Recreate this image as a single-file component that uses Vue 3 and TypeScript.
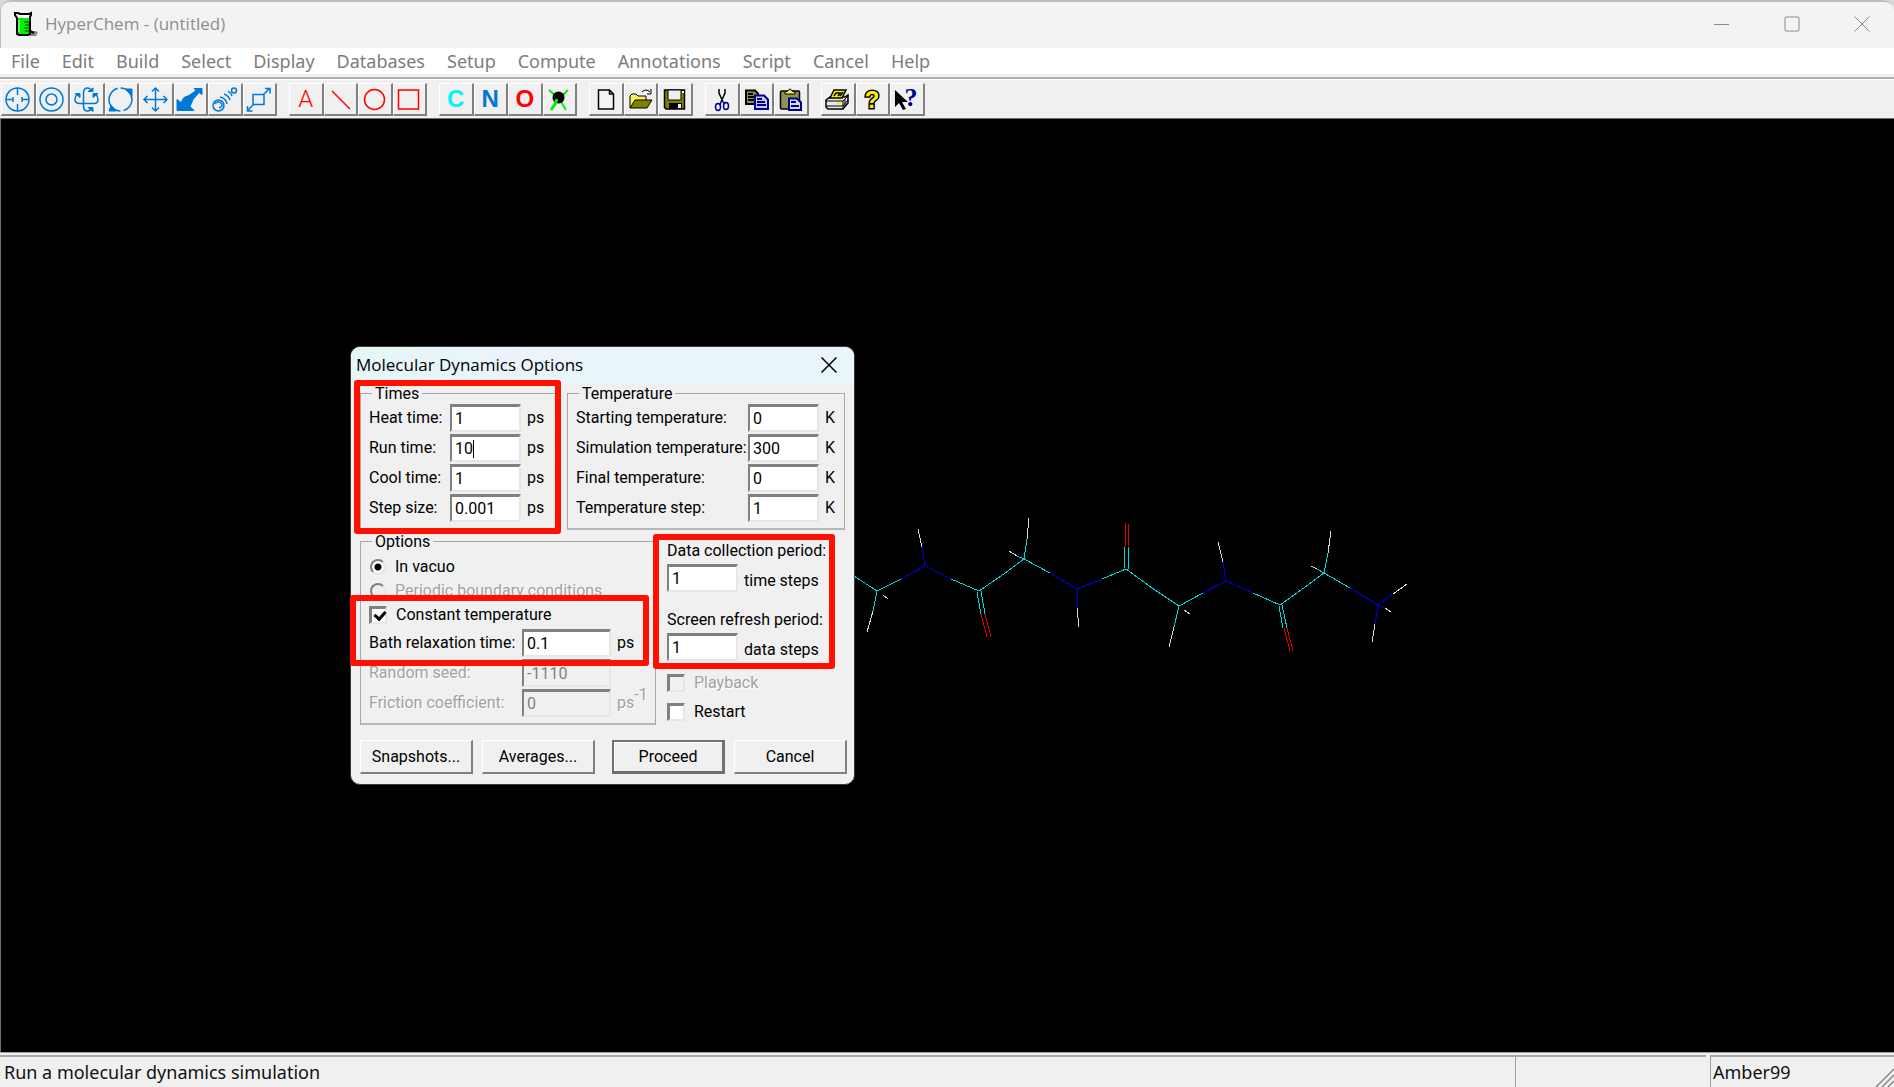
<script setup lang="ts">
import { ref } from 'vue'

const menus = ['File', 'Edit', 'Build', 'Select', 'Display', 'Databases', 'Setup', 'Compute', 'Annotations', 'Script', 'Cancel', 'Help']

interface Field { id: string; label: string; value: string; unit: string; caret?: boolean }

const times = ref<Field[]>([
  { id: 'heat', label: 'Heat time:', value: '1', unit: 'ps' },
  { id: 'run', label: 'Run time:', value: '10', unit: 'ps', caret: true },
  { id: 'cool', label: 'Cool time:', value: '1', unit: 'ps' },
  { id: 'step', label: 'Step size:', value: '0.001', unit: 'ps' },
])
const temps = ref<Field[]>([
  { id: 't-start', label: 'Starting temperature:', value: '0', unit: 'K' },
  { id: 't-sim', label: 'Simulation temperature:', value: '300', unit: 'K' },
  { id: 't-final', label: 'Final temperature:', value: '0', unit: 'K' },
  { id: 't-step', label: 'Temperature step:', value: '1', unit: 'K' },
])
const bath = ref('0.1')
const seed = ref('-1110')
const friction = ref('0')
const collect = ref('1')
const refresh = ref('1')
const medium = ref('vacuo')
const constantTemp = ref(true)
const playback = ref(false)
const restart = ref(false)

// Half-bonds of the peptide chain, coloured by the atom they belong to.
const C = '#00d8d8'
const N = '#0000e0'
const O = '#e00000'
const H = '#d8d8d8'
type Bond = [string, number, number, number, number]
const bonds: Bond[] = [
  [C, 854, 576, 877, 591], [C, 877, 591, 873, 611], [H, 873, 611, 867, 632], [H, 883, 595, 888, 599],
  [C, 877, 591, 901, 579], [N, 901, 579, 925, 566], [N, 925, 566, 922, 547], [H, 922, 547, 918, 529],
  [N, 925, 566, 951, 579], [C, 951, 579, 979, 591], [C, 977, 592, 981, 614], [C, 981, 591, 985, 614],
  [O, 981, 614, 987, 637], [O, 985, 614, 991, 637], [C, 979, 591, 1001, 576], [C, 1001, 576, 1024, 559],
  [C, 1024, 559, 1027, 539], [H, 1027, 539, 1029, 518], [C, 1024, 559, 1017, 556], [H, 1017, 556, 1009, 551],
  [C, 1024, 559, 1050, 573], [N, 1050, 573, 1077, 589], [N, 1077, 589, 1077, 608], [H, 1077, 608, 1079, 627],
  [N, 1077, 589, 1102, 579], [C, 1102, 579, 1126, 569], [C, 1124, 569, 1125, 547], [C, 1128, 569, 1128, 547],
  [O, 1125, 547, 1125, 523], [O, 1128, 547, 1129, 524], [C, 1126, 569, 1152, 588], [C, 1152, 588, 1179, 606],
  [C, 1179, 606, 1174, 627], [H, 1174, 627, 1169, 647], [H, 1184, 610, 1190, 614], [C, 1179, 606, 1203, 593],
  [N, 1203, 593, 1226, 581], [N, 1226, 581, 1223, 562], [H, 1223, 562, 1218, 542], [N, 1226, 581, 1253, 593],
  [C, 1253, 593, 1280, 605], [C, 1279, 606, 1283, 628], [C, 1282, 605, 1287, 628], [O, 1284, 628, 1290, 651],
  [O, 1287, 628, 1293, 651], [C, 1280, 605, 1301, 590], [C, 1301, 590, 1324, 573], [C, 1324, 573, 1328, 553],
  [H, 1328, 553, 1331, 531], [C, 1324, 573, 1317, 569], [H, 1317, 569, 1311, 566], [C, 1324, 573, 1350, 588],
  [N, 1350, 588, 1378, 605], [N, 1378, 605, 1393, 594], [H, 1393, 594, 1407, 584], [N, 1378, 605, 1385, 608],
  [H, 1385, 608, 1391, 612], [N, 1378, 605, 1375, 624], [H, 1375, 624, 1372, 642],
]
</script>

<template>
  <div class="window">
    <header class="titlebar">
      <svg class="logo" width="26" height="26" viewBox="0 0 26 26">
        <path d="M17 20h5l3 1-2 4h-6z" fill="#888" />
        <path d="M3 7h15v16H5z" fill="#00f000" />
        <path d="M2 2h3l2 1h9l2-1v2l-1 2v17l-2 1H6l-2-1V7L2 4z" fill="none" stroke="#000" stroke-width="2" />
        <path d="M6 4h10v3H5z" fill="#fff" />
        <path d="M11 11h5M12 14h4M11 17h5M12 20h4" stroke="#003800" />
        <path d="M6 9v12" stroke="#baffba" />
        <path d="M17 20l4 2" stroke="#000" stroke-width="2" />
      </svg>
      <h1>HyperChem - (untitled)</h1>
      <div class="winbuttons">
        <button aria-label="Minimize"><svg width="16" height="16"><path d="M0 8.5h15" /></svg></button>
        <button aria-label="Maximize"><svg width="16" height="16"><rect x="1" y="1" width="14" height="14" rx="1" /></svg></button>
        <button aria-label="Close"><svg width="16" height="16"><path d="M0.5 0.5l15 15M15.5 0.5l-15 15" /></svg></button>
      </div>
    </header>

    <nav class="menubar">
      <button v-for="m in menus" :key="m">{{ m }}</button>
    </nav>

    <div class="toolbar">
      <div class="group eight blue">
        <button aria-label="Draw"><svg viewBox="0 0 32 30"><circle cx="15.5" cy="15.5" r="11.5" /><path d="M15.5 4v7M15.5 20v7M4 15.5h7M20 15.5h7M11 13v5M20 13v5" /></svg></button>
        <button aria-label="Select"><svg viewBox="0 0 32 30"><circle cx="15.5" cy="15.5" r="11.5" /><circle cx="15.5" cy="15.5" r="5.5" /></svg></button>
        <button aria-label="Rotate out of plane"><svg viewBox="0 0 32 30"><path d="M12.5 23V9q0-5 4-5 3 0 4 3M12.5 22q0 5 4 5 3 0 4-3M8 19.5h15q4 0 4-4 0-3-2-5M9 19.5q-5 0-5-4 0-3 2-5" /><path class="solid" d="M17 7.500h5V4zM17 23.500h5v4zM4 9.500h5v4zM27 9.500h-5v4z" /></svg></button>
        <button aria-label="Rotate in plane"><svg viewBox="0 0 32 30"><circle cx="15.5" cy="15.5" r="11.5" stroke-dasharray="15 3 33 3 19" /><path class="solid" d="M20 5h7v7zM4 27h7l-5-6z" /></svg></button>
        <button aria-label="Translate"><svg viewBox="0 0 32 30"><path d="M15.5 4v23M4 15.5h23M12 7.500l3.500-3.500 3.500 3.500M12 23.500l3.500 3.500 3.500-3.500M7.500 12l-3.500 3.500 3.500 3.500M23.500 12l3.500 3.500-3.500 3.500" /></svg></button>
        <button aria-label="Zoom"><svg viewBox="0 0 32 30"><path class="solid" d="M3 15.500l4 3 3-5 5-2 7-5-2-2h8v6l-3-2-6 7-3 7 4 4H3z" /></svg></button>
        <button aria-label="Z translate"><svg viewBox="0 0 32 30"><circle cx="9.5" cy="21.5" r="5.5" /><path d="M6 20q3-4 6-1t-2 5M11 13q6 1 7 7M15 10q5 2 6 6M19 7q3 2 4 5" /><circle cx="25" cy="6.5" r="2.5" /></svg></button>
        <button aria-label="Clip"><svg viewBox="0 0 32 30"><path d="M10 10.500h11v10H10zM21 10l6-6M22 4.500h5v5M10 21l-6 6M4.500 22v5h5" /></svg></button>
      </div>
      <div class="group four red">
        <button aria-label="Annotate" class="thin">A</button>
        <button aria-label="Line"><svg viewBox="0 0 32 30"><path d="M8 7l18 18" /></svg></button>
        <button aria-label="Circle"><svg viewBox="0 0 32 30"><circle cx="15.5" cy="15.5" r="10" /></svg></button>
        <button aria-label="Rectangle"><svg viewBox="0 0 32 30"><path d="M5.500 6h20v19h-20z" /></svg></button>
      </div>
      <div class="group four">
        <button class="c">C</button>
        <button class="n">N</button>
        <button class="o">O</button>
        <button aria-label="Methane"><svg viewBox="0 0 32 30"><path d="M6 6l9 8M25 6l-8 8M23 26l-6-10" stroke="#00f000" stroke-width="2" /><circle cx="15.5" cy="13.5" r="6" /><path d="M14 15l-2 5-4 6" fill="none" stroke="#00f000" stroke-width="3" /></svg></button>
      </div>
      <div class="group three">
        <button aria-label="New"><svg viewBox="0 0 32 30"><path d="M8.500 6h11l4 4v15h-15zM19.500 6v4h4" fill="#f4f4f4" stroke="#000" stroke-width="1.5" /></svg></button>
        <button aria-label="Open"><svg viewBox="0 0 32 30"><path d="M5 24V12l2-2h4l2 2h8v4" fill="#f8f060" stroke="#000" /><path d="M5 24l5-8h17l-5 8z" fill="#808000" stroke="#000" /><path d="M17 8q4-4 8 0M26 5v5h-4" fill="none" stroke="#000" /></svg></button>
        <button aria-label="Save"><svg viewBox="0 0 32 30"><path d="M5.500 6h20v19H7l-1.500-1.500z" fill="#808000" stroke="#000" stroke-width="1.5" /><path d="M9 6h13v10H9z" fill="#f0f0f0" stroke="#000" /><path d="M10 19h13v6H10z" /><path d="M19 20h3v4h-3zM23 7h2v2h-2z" fill="#f0f0f0" /></svg></button>
      </div>
      <div class="group three">
        <button aria-label="Cut"><svg viewBox="0 0 32 30"><path d="M13 5v4l4 9M19 5v4l-4 9" fill="none" stroke="#000" stroke-width="1.5" /><g fill="none" stroke="#000090" stroke-width="1.5"><ellipse cx="12" cy="23" rx="2.5" ry="3.5" /><ellipse cx="20" cy="22" rx="2.5" ry="3.5" /><path d="M15 18l-1 3M17 18l2 2" /></g></svg></button>
        <button aria-label="Copy"><svg viewBox="0 0 32 30"><path d="M5 6.500h9l3 3V20H5z" fill="#909050" stroke="#000" stroke-width="2" /><path d="M7 10h5M7 13h7M7 16h7" stroke="#000" stroke-width="2" /><path d="M14 11.500h9l4 4V25H14z" fill="#c8c8e0" stroke="#000090" stroke-width="2" /><path d="M16 15h5M16 18h8M16 21h9" stroke="#000090" stroke-width="2" /></svg></button>
        <button aria-label="Paste"><svg viewBox="0 0 32 30"><rect x="5.5" y="7" width="19" height="18" rx="1" fill="#909050" stroke="#000" stroke-width="1.5" /><path d="M10 10V8l3-1q2-4 4 0l3 1v2z" fill="#f8f060" stroke="#000" /><path d="M14 14.500h8l4 4V26H14z" fill="#d8d8e8" stroke="#000090" stroke-width="2" /><path d="M16 18h5M16 22h8" stroke="#000090" stroke-width="2" /></svg></button>
      </div>
      <div class="group three">
        <button aria-label="Print"><svg viewBox="0 0 32 30"><path d="M4 16l4-3h15l3-2v8l-5 6H6l-2-2z" fill="#e8e8e8" stroke="#000" stroke-width="1.5" /><path d="M8 14l4-8h12l-4 8z" fill="#f8f000" stroke="#000" stroke-width="1.5" /><path d="M12 12l2-3h4l-2 3M18 12l3-4" fill="none" stroke="#000" stroke-width="1.5" /><path d="M4 17h17l5-5M4 22h17l5-6M21 17v8M23 15v8" fill="none" stroke="#000" /><path d="M15 18h4v2h-4z" fill="#f8f000" /></svg></button>
        <button aria-label="Help"><svg viewBox="0 0 32 30"><text x="15" y="24" text-anchor="middle" class="help">?</text></svg></button>
        <button aria-label="Context help"><svg viewBox="0 0 32 30"><path d="M4 6v17l4-4 4 7 3-1-4-7h6z" /><text x="20" y="22" text-anchor="middle" class="what">?</text></svg></button>
      </div>
    </div>

    <main class="workspace">
      <svg class="molecule" width="1894" height="933" viewBox="0 119 1894 933" shape-rendering="crispEdges">
        <line v-for="(b, i) in bonds" :key="i" :stroke="b[0]" :x1="b[1]" :y1="b[2]" :x2="b[3]" :y2="b[4]" />
      </svg>

      <section class="dialog" role="dialog" aria-labelledby="dlg-title">
        <header class="dlg-title">
          <h2 id="dlg-title">Molecular Dynamics Options</h2>
          <button aria-label="Close dialog"><svg width="16" height="16"><path d="M0.5 0.5l15 15M15.5 0.5l-15 15" /></svg></button>
        </header>
        <form class="dlg-body" @submit.prevent>
          <div class="row">
            <fieldset class="times">
              <legend>Times</legend>
              <div v-for="f in times" :key="f.id" class="field">
                <label :for="f.id">{{ f.label }}</label>
                <span class="box"><input :id="f.id" v-model="f.value" type="text"><i v-if="f.caret" class="caret" /></span>
                <span class="unit">{{ f.unit }}</span>
              </div>
            </fieldset>
            <fieldset class="temps">
              <legend>Temperature</legend>
              <div v-for="f in temps" :key="f.id" class="field">
                <label :for="f.id">{{ f.label }}</label>
                <span class="box"><input :id="f.id" v-model="f.value" type="text"></span>
                <span class="unit">{{ f.unit }}</span>
              </div>
            </fieldset>
          </div>

          <div class="row second">
            <fieldset class="options">
              <legend>Options</legend>
              <label class="pick"><input v-model="medium" type="radio" name="medium" value="vacuo">In vacuo</label>
              <label class="pick off"><input v-model="medium" type="radio" name="medium" value="periodic" disabled>Periodic boundary conditions</label>
              <label class="pick"><input v-model="constantTemp" type="checkbox">Constant temperature</label>
              <div class="field first">
                <label for="bath">Bath relaxation time:</label>
                <span class="box"><input id="bath" v-model="bath" type="text"></span>
                <span class="unit">ps</span>
              </div>
              <div class="field off">
                <label for="seed">Random seed:</label>
                <span class="box"><input id="seed" v-model="seed" type="text" disabled></span>
              </div>
              <div class="field off">
                <label for="friction">Friction coefficient:</label>
                <span class="box"><input id="friction" v-model="friction" type="text" disabled></span>
                <span class="unit">ps<sup>-1</sup></span>
              </div>
            </fieldset>
            <div class="periods">
              <label for="collect">Data collection period:</label>
              <div class="period"><span class="box"><input id="collect" v-model="collect" type="text"></span><span>time steps</span></div>
              <label for="refresh">Screen refresh period:</label>
              <div class="period"><span class="box"><input id="refresh" v-model="refresh" type="text"></span><span>data steps</span></div>
              <label class="pick off"><input v-model="playback" type="checkbox" disabled>Playback</label>
              <label class="pick"><input v-model="restart" type="checkbox">Restart</label>
            </div>
          </div>

          <div class="actions">
            <button type="button">Snapshots...</button>
            <button type="button">Averages...</button>
            <button type="submit" class="default">Proceed</button>
            <button type="button">Cancel</button>
          </div>
        </form>
        <div class="mark mark-times" />
        <div class="mark mark-bath" />
        <div class="mark mark-periods" />
      </section>
    </main>

    <footer class="status">
      <div class="pane message">Run a molecular dynamics simulation</div>
      <div class="pane middle" />
      <div class="pane method">Amber99
        <svg class="grip" width="20" height="20"><path d="M2 20L20 2M8 20L20 8M14 20l6-6" stroke="#888" stroke-width="1.5" /></svg>
      </div>
    </footer>
  </div>
</template>

<style>
body { margin: 0; overflow: hidden; background: #d8d8d8; }
</style>

<style scoped>
* { box-sizing: border-box; }
button { font: inherit; color: inherit; padding: 0; margin: 0; border: 0; background: none; }
.window {
  display: flex; flex-direction: column; height: 100vh; overflow: hidden;
  background: #f0f0f0; border-radius: 10px 10px 0 0; font-family: "Noto Sans", "Open Sans", sans-serif;
}
.titlebar {
  flex: none; display: flex; align-items: center; height: 48px; padding: 0 0 2px 12px;
  background: #f3f3f3; border-top: 2px solid #bdbdbd; border-left: 1px solid #bdbdbd; border-radius: 10px 10px 0 0;
}
.logo { flex: none; }
.titlebar h1 { flex: 1; margin: 0 0 0 6px; font: 400 17px/24px "Open Sans", sans-serif; color: #8e8e8e; }
.winbuttons { display: flex; margin-right: -3px; }
.winbuttons button { display: flex; align-items: center; justify-content: center; width: 70px; height: 44px; }
.winbuttons svg { fill: none; stroke: #8a8a8a; }

.menubar { flex: none; display: flex; gap: 22px; height: 26px; padding-left: 11px; background: #fff; font-size: 18px; line-height: 26px; color: #7c7c7c; }

.toolbar {
  flex: none; display: flex; gap: 12px; height: 45px; padding: 6px 0 0 1px;
  border-top: 3px solid #f0f0f0; border-bottom: 1px solid #707070; background: #f0f0f0;
  box-shadow: inset 0 2px #b0b0b0, inset 0 3px #fff;
}
.group { display: flex; }
.eight { width: 276px; }
.four { width: 138px; }
.three { width: 104px; }
.group button {
  flex: 1; display: flex; align-items: center; justify-content: center; height: 33px; overflow: hidden;
  border: solid; border-width: 1px 2px 2px 1px; border-color: #fff #808080 #808080 #fff; background: #f0f0f0;
  font: 700 24px/30px "Liberation Sans", Arial, sans-serif;
}
.group svg { flex: none; width: 32px; height: 30px; }
.blue svg, .red svg { fill: none; stroke: #0078d7; stroke-width: 1.5; }
.red svg { stroke: #f00; }
.blue .solid { fill: #0078d7; stroke-width: 1; }
.group .thin { font: 300 24px/30px Roboto, sans-serif; color: #f00; }
.c { color: #00f4ff; }
.n { color: #0078d7; }
.o { color: #f00; }
.help { font: 700 24px "Liberation Sans", Arial, sans-serif; fill: #f8f000; stroke: #000; stroke-width: 3px; paint-order: stroke; }
.what { font: 700 26px "Liberation Serif", serif; fill: #000090; }

.workspace { flex: 1; position: relative; overflow: hidden; background: #000; border-left: 1px solid #707070; }
.molecule { display: block; margin-left: -1px; }

.dialog {
  position: absolute; left: 349px; top: 227px; width: 505px; border: 1px solid #3a3a3a; border-radius: 10px;
  background: #f0f0f0; color: #000; font: 16px/18px Roboto, "Liberation Sans", sans-serif;
}
.dlg-title {
  display: flex; align-items: center; justify-content: space-between; height: 37px; padding: 0 17px 2px 5px;
  border-radius: 9px 9px 0 0; background: linear-gradient(90deg, #e6f6f6, #eaf4fb 40%);
}
.dlg-title h2 { margin: 0; font: 400 17px/24px "Open Sans", sans-serif; }
.dlg-title button { height: 16px; }
.dlg-title svg { display: block; fill: none; stroke: #000; stroke-width: 1.5; }
.dlg-body { padding: 0 7px 10px 9px; }
.row { display: flex; gap: 9px; }
.second { margin-top: 2px; gap: 11px; }
fieldset { margin: 0; padding: 2px 6px 6px 8px; border: 1px solid #a8a8a8; border-bottom-width: 2px; border-bottom-color: #b8b8b8; min-width: 0; }
legend { margin-left: 3px; padding: 2px 3px 0; line-height: 16px; }
.times { width: 198px; }
.temps { width: 278px; }
.options { width: 296px; padding-top: 5px; }
.field { display: flex; align-items: center; height: 28px; }
.field + .field { margin-top: 2px; }
.field.first { margin-top: 2px; }
.field label { flex: none; white-space: nowrap; width: 81px; }
.temps .field label { width: 172px; }
.options .field label { width: 153px; }
.box { flex: none; position: relative; display: block; width: 71px; height: 28px; }
.options .box { width: 89px; }
.box input {
  display: block; width: 100%; height: 100%; padding: 0 0 0 3px; margin: 0; border: solid; border-width: 3px 2px 2px 2px;
  border-color: #808080 #e6e6e6 #e6e6e6 #808080; border-radius: 0; background: #fff; color: #000; font: inherit; outline: 0;
}
.box input:disabled { background: #f0f0f0; color: #808080; }
.caret { position: absolute; left: 23px; top: 6px; width: 1px; height: 18px; background: #000; }
.unit { margin-left: 6px; white-space: nowrap; }
.unit sup { font-size: 16px; line-height: 0; vertical-align: 8px; }
.off { color: #a2a2a2; text-shadow: 1px 1px #fff; }
.pick { display: flex; align-items: center; height: 24px; white-space: nowrap; }
.pick input { appearance: none; flex: none; width: 18px; height: 18px; margin: 0 9px 0 0; background: #fff; border: solid; border-width: 3px 2px 2px 3px; border-color: #808080 #e6e6e6 #e6e6e6 #808080; }
.pick input:disabled { background: #f0f0f0; }
.pick input[type="radio"] { width: 16px; height: 16px; margin: 0 9px 0 1px; border-width: 2px; border-radius: 50%; }
.pick input[type="radio"]:checked { background: radial-gradient(circle, #000 3px, #fff 4px); }
.pick input[type="checkbox"]:checked::after { content: ""; display: block; width: 5px; height: 8px; margin: 0 0 0 4px; border: solid #000; border-width: 0 3px 3px 0; transform: rotate(42deg); }
.periods { flex: 1; padding-top: 10px; }
.periods > label { display: block; height: 18px; margin-bottom: 4px; white-space: nowrap; }
.period { display: flex; align-items: flex-end; gap: 6px; height: 28px; margin-bottom: 19px; line-height: 22px; white-space: nowrap; }
.periods .period + .pick { margin-top: -6px; }
.periods > .pick { display: flex; margin-bottom: 11px; }
.periods > .pick:last-child { margin-bottom: 0; }
.actions { display: flex; gap: 9px; margin-top: 15px; }
.actions button { width: 113px; height: 34px; border: solid; border-width: 1px 2px 2px 1px; border-color: #fff #808080 #808080 #fff; background: #f0f0f0; }
.actions .default { margin-left: 8px; border-width: 2px 3px 3px 2px; border-color: #707070; box-shadow: inset 1px 1px #fff; }
.mark { position: absolute; border: 6px solid #ff1000; border-radius: 3px; pointer-events: none; }
.mark-times { left: 3px; top: 33px; width: 207px; height: 154px; }
.mark-bath { left: -1px; top: 248px; width: 299px; height: 71px; }
.mark-periods { left: 302px; top: 187px; width: 182px; height: 135px; }

.status { flex: none; display: flex; height: 35px; padding-top: 2px; border-top: 1px solid #a0a0a0; font-size: 18px; color: #101010; background: #f0f0f0; }
.pane { height: 32px; border-top: 2px solid #a8a8a8; line-height: 31px; padding-left: 4px; white-space: nowrap; }
.message { flex: 1; border-right: 1px solid #a0a0a0; }
.middle { width: 190px; margin-right: 4px; }
.method { position: relative; width: 184px; padding-left: 2px; border-left: 1px solid #a0a0a0; }
.grip { position: absolute; right: 0; bottom: 0; }
</style>
